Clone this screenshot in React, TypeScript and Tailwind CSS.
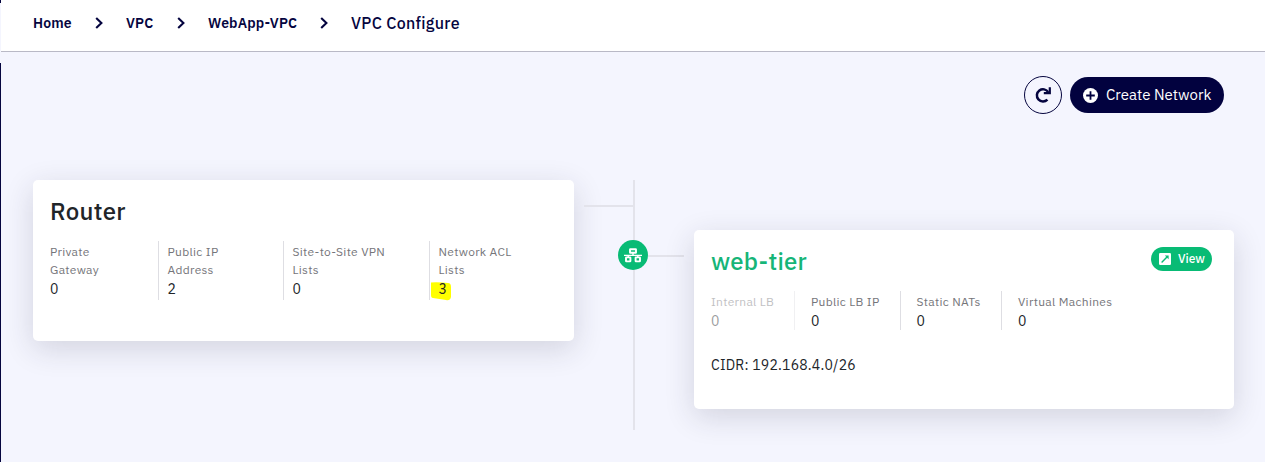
import { ReactNode } from "react";

function Chevron() {
  return (
    <svg className="h-3 w-2" viewBox="0 0 8 12" fill="none" stroke="#05053f" strokeWidth="2.1">
      <path d="M1.2 1 6.4 6 1.2 11" />
    </svg>
  );
}

function RefreshIcon() {
  return (
    <svg className="size-[18px]" viewBox="0 0 18 18" fill="none" stroke="#05053f" strokeWidth="2.5">
      <path d="M14.2 6.2A6.1 6.1 0 1 0 13.4 13.6" />
      <path d="M15.8 1.3V7.1H9.8" strokeWidth="2.2" />
    </svg>
  );
}

function PlusCircleIcon() {
  return (
    <svg className="size-[15px] shrink-0" viewBox="0 0 15 15">
      <circle cx="7.5" cy="7.5" r="7.5" fill="#fff" />
      <path d="M7.5 3.2v8.6M3.2 7.5h8.6" stroke="#02023f" strokeWidth="1.8" />
    </svg>
  );
}

function NetworkIcon() {
  return (
    <svg className="h-[15px] w-[18px]" viewBox="0 0 18 15" fill="none" stroke="#fff" strokeWidth="1.9">
      <rect x="6" y="1.2" width="6" height="3.6" rx="0.4" />
      <path d="M9 5v2.4M0 7.4h18M4.2 7.4v2M13.8 7.4v2" strokeWidth="1.4" />
      <rect x="2" y="9.4" width="4.4" height="4" rx="0.4" />
      <rect x="11.6" y="9.4" width="4.4" height="4" rx="0.4" />
    </svg>
  );
}

function OpenIcon() {
  return (
    <svg className="size-3 shrink-0" viewBox="0 0 12 12">
      <rect width="12" height="12" rx="1.2" fill="#fff" />
      <path d="M2.6 9.4 8 4" stroke="#08bb75" strokeWidth="1.4" />
      <path d="M5.8 2.4H9.6V6.2Z" fill="#08bb75" />
    </svg>
  );
}

function Stat({ label, value, className = "" }: { label: ReactNode; value: ReactNode; className?: string }) {
  return (
    <div className={className}>
      <div className="text-[12px] leading-[18px] whitespace-nowrap text-[#75757a]">{label}</div>
      <div className="text-[14px] leading-5 text-[#212529]">{value}</div>
    </div>
  );
}

export default function App() {
  return (
    <div className="flex h-[462px] w-[1265px] overflow-hidden bg-[#f4f5fe] font-['IBM_Plex_Sans','Roboto',sans-serif]">
      <div className="flex w-px shrink-0 flex-col">
        <div className="h-[3px] bg-[#05053f]" />
        <div className="h-[60px] bg-[#f4f5fe]" />
        <div className="grow bg-[#05053f]" />
      </div>
      <div className="flex grow flex-col">
        <nav className="flex h-[52px] items-center border-b border-[#b9b9c6] bg-white pb-[5px] pl-8 text-[14px] font-semibold whitespace-nowrap text-[#05053f]">
          <span className="w-[62px] tracking-[0.15px]">Home</span>
          <Chevron />
          <span className="ml-[23px] w-[51px] tracking-[0.15px]">VPC</span>
          <Chevron />
          <span className="ml-[23px] w-[112px] tracking-[0.15px]">WebApp-VPC</span>
          <Chevron />
          <span className="ml-[23px] text-[16px] font-medium tracking-[0.3px]">VPC Configure</span>
        </nav>

        <div className="flex h-32 items-start justify-end gap-2 pt-6 pr-[41px]">
          <button className="flex size-[38px] items-center justify-center rounded-full border border-[#05053f]">
            <RefreshIcon />
          </button>
          <button className="mt-px flex h-9 w-[154px] items-center gap-2 rounded-full bg-[#02023f] pl-[13px] text-[15px] whitespace-nowrap text-white">
            <PlusCircleIcon />
            <span>Create Network</span>
          </button>
        </div>

        <div className="flex items-start pl-8">
          <section className="h-[161px] w-[541px] shrink-0 rounded-[5px] bg-white px-[17px] pt-[15px] shadow-[0_8px_30px_rgba(40,35,60,0.16)]">
            <h2 className="text-[24px] leading-8 font-medium tracking-[0.3px] text-[#212529]">Router</h2>
            <div className="mt-[14px] flex h-[59px] tracking-[0.3px]">
              <Stat className="w-[108px] pt-0.5" label={<>Private<br />Gateway</>} value="0" />
              <Stat className="w-[125px] border-l border-[#dedee3] pt-0.5 pl-[8.5px]" label={<>Public IP<br />Address</>} value="2" />
              <Stat className="w-[146px] border-l border-[#dedee3] pt-0.5 pl-[8.5px]" label={<>Site-to-Site VPN<br />Lists</>} value="0" />
              <Stat
                className="border-l border-[#dedee3] pt-0.5 pl-[8.5px]"
                label={<>Network ACL<br />Lists</>}
                value={
                  <span className="relative inline-block">
                    <svg className="absolute top-0.5 left-[-8.5px] h-5 w-[22px]" viewBox="0 0 22 20">
                      <path d="M1 1.5Q8 1 18 2Q21 2 21 6V16Q20 20 16 19L3 17Q1 17 1 14Z" fill="#ffff00" />
                    </svg>
                    <span className="relative">3</span>
                  </span>
                }
              />
            </div>
          </section>

          <div className="mt-[25px] ml-2.5 h-0.5 w-[49px] bg-[#e3e3eb]" />
          <div className="flex h-[250px] w-0.5 shrink-0 justify-center bg-[#e3e3eb]">
            <div className="mt-[60px] mr-0.5 flex size-[30px] shrink-0 items-center justify-center rounded-full bg-[#08bb75]">
              <NetworkIcon />
            </div>
          </div>
          <div className="mt-[75px] ml-[13px] h-0.5 w-9 bg-[#e3e3eb]" />

          <section className="mt-[50px] ml-[10px] h-[179px] w-[540px] shrink-0 rounded-[5px] bg-white pt-[15px] pl-[17px] shadow-[0_8px_30px_rgba(40,35,60,0.16)]">
            <div className="flex items-start justify-between pr-[22px]">
              <h2 className="text-[24px] leading-8 font-medium tracking-[0.25px] text-[#16b578]">web-tier</h2>
              <button className="mt-0.5 flex h-6 w-[61px] items-center gap-[7px] rounded-full bg-[#08bb75] pl-2 text-[12px] font-medium text-white">
                <OpenIcon />
                <span>View</span>
              </button>
            </div>
            <div className="mt-[14px] flex h-[39px] tracking-[0.3px]">
              <Stat className="w-[84px] border-r border-[#dedee3] pt-0.5 opacity-45" label="Internal LB" value="0" />
              <Stat className="w-[106px] border-r border-[#dedee3] pt-0.5 pl-4" label="Public LB IP" value="0" />
              <Stat className="w-[101px] border-r border-[#dedee3] pt-0.5 pl-[15.5px]" label="Static NATs" value="0" />
              <Stat className="pt-0.5 pl-4" label="Virtual Machines" value="0" />
            </div>
            <p className="mt-[25px] text-[14px] leading-5 tracking-[0.2px] text-[#212529]">CIDR: 192.168.4.0/26</p>
          </section>
        </div>
      </div>
    </div>
  );
}
